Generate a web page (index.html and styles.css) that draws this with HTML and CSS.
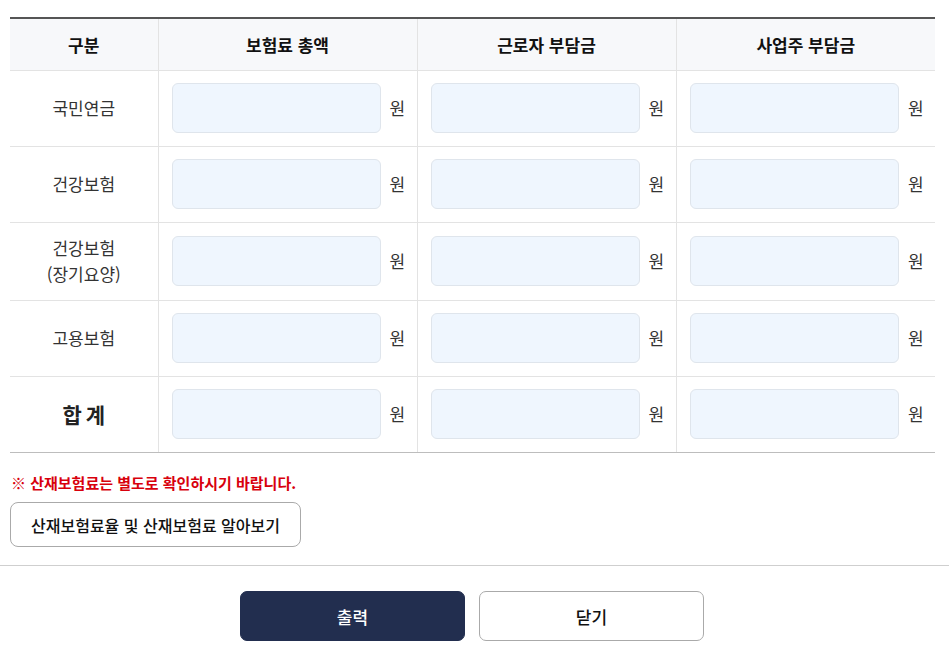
FILE: index.html
```html
<!DOCTYPE html>
<html lang="ko">
<head>
<meta charset="utf-8">
<title>4대보험료 계산</title>
<link rel="stylesheet" href="styles.css">
</head>
<body>
<div class="content">
  <table class="ins-table">
    <colgroup>
      <col class="col-label">
      <col class="col-val">
      <col class="col-val">
      <col class="col-val">
    </colgroup>
    <thead>
      <tr>
        <th>구분</th>
        <th>보험료 총액</th>
        <th>근로자 부담금</th>
        <th>사업주 부담금</th>
      </tr>
    </thead>
    <tbody>
      <tr>
        <td class="label">국민연금</td>
        <td><div class="field"><input class="amount" type="text"><span class="unit">원</span></div></td>
        <td><div class="field"><input class="amount" type="text"><span class="unit">원</span></div></td>
        <td><div class="field"><input class="amount" type="text"><span class="unit">원</span></div></td>
      </tr>
      <tr>
        <td class="label">건강보험</td>
        <td><div class="field"><input class="amount" type="text"><span class="unit">원</span></div></td>
        <td><div class="field"><input class="amount" type="text"><span class="unit">원</span></div></td>
        <td><div class="field"><input class="amount" type="text"><span class="unit">원</span></div></td>
      </tr>
      <tr>
        <td class="label">건강보험<br>(장기요양)</td>
        <td><div class="field"><input class="amount" type="text"><span class="unit">원</span></div></td>
        <td><div class="field"><input class="amount" type="text"><span class="unit">원</span></div></td>
        <td><div class="field"><input class="amount" type="text"><span class="unit">원</span></div></td>
      </tr>
      <tr>
        <td class="label">고용보험</td>
        <td><div class="field"><input class="amount" type="text"><span class="unit">원</span></div></td>
        <td><div class="field"><input class="amount" type="text"><span class="unit">원</span></div></td>
        <td><div class="field"><input class="amount" type="text"><span class="unit">원</span></div></td>
      </tr>
      <tr class="total">
        <td class="label total-label">합 계</td>
        <td><div class="field"><input class="amount" type="text"><span class="unit">원</span></div></td>
        <td><div class="field"><input class="amount" type="text"><span class="unit">원</span></div></td>
        <td><div class="field"><input class="amount" type="text"><span class="unit">원</span></div></td>
      </tr>
    </tbody>
  </table>
  <p class="notice">※ 산재보험료는 별도로 확인하시기 바랍니다.</p>
  <button class="btn-outline btn-info" type="button">산재보험료율 및 산재보험료 알아보기</button>
</div>
<div class="footer">
  <button class="btn btn-primary" type="button">출력</button>
  <button class="btn btn-secondary" type="button">닫기</button>
</div>
</body>
</html>
```

FILE: styles.css
```css
* { box-sizing: border-box; }

html, body {
  margin: 0;
  padding: 0;
  background: #fff;
}

body {
  font-family: "Noto Sans CJK KR", "Noto Sans", sans-serif;
  color: #333;
  font-size: 17px;
}

.content {
  padding: 17px 14px 0 10px;
}

.ins-table {
  width: 925px;
  border-collapse: collapse;
  table-layout: fixed;
  border-top: 2px solid #555;
  border-bottom: 1px solid #bdbdbd;
}

.col-label { width: 148px; }
.col-val { width: 259px; }

.ins-table th,
.ins-table td {
  border-left: 1px solid #e3e3e3;
  border-bottom: 1px solid #e3e3e3;
}

.ins-table th:first-child,
.ins-table td:first-child {
  border-left: none;
}

.ins-table tr.total td {
  border-bottom: 1px solid #bdbdbd;
}

.ins-table th {
  background: #f7f8fa;
  color: #111;
  font-weight: 700;
  font-size: 17px;
  line-height: 24px;
  padding: 14px 8px 13px;
  text-align: center;
}

.ins-table td {
  padding: 12px 10px 13px 13px;
  vertical-align: middle;
}

.ins-table td.label {
  text-align: center;
  line-height: 26px;
  color: #333;
  font-size: 17px;
  padding-left: 8px;
  padding-right: 8px;
}

.ins-table td.total-label {
  font-size: 21px;
  font-weight: 700;
  color: #222;
  word-spacing: -2px;
}

.field {
  display: flex;
  align-items: center;
  gap: 9px;
}

.amount {
  flex: 1;
  min-width: 0;
  height: 50px;
  border: 1px solid #dfe5ec;
  border-radius: 6px;
  background: #eff6fe;
  padding: 0 10px;
  font: inherit;
  outline: none;
}

.unit {
  width: 17px;
  color: #333;
  font-size: 17px;
  line-height: 24px;
  text-align: left;
}

.notice {
  margin: 19px 0 0 1px;
  color: #d8000c;
  font-weight: 700;
  font-size: 15px;
  line-height: 22px;
}

.btn-outline {
  margin-top: 8px;
  height: 45px;
  padding: 0 20px;
  border: 1px solid #aaa;
  border-radius: 8px;
  background: #fff;
  color: #111;
  font-family: inherit;
  font-size: 16px;
  font-weight: 500;
}

.footer {
  margin-top: 18px;
  border-top: 1px solid #cfcfcf;
  padding-top: 25px;
  display: flex;
  justify-content: center;
  gap: 14px;
  padding-right: 5px;
}

.btn {
  width: 225px;
  height: 50px;
  border-radius: 7px;
  font-family: inherit;
  font-size: 17px;
  font-weight: 500;
}

.btn-primary {
  background: #222e4f;
  border: 1px solid #222e4f;
  color: #fff;
}

.btn-secondary {
  background: #fff;
  border: 1px solid #aaa;
  color: #111;
}
```
